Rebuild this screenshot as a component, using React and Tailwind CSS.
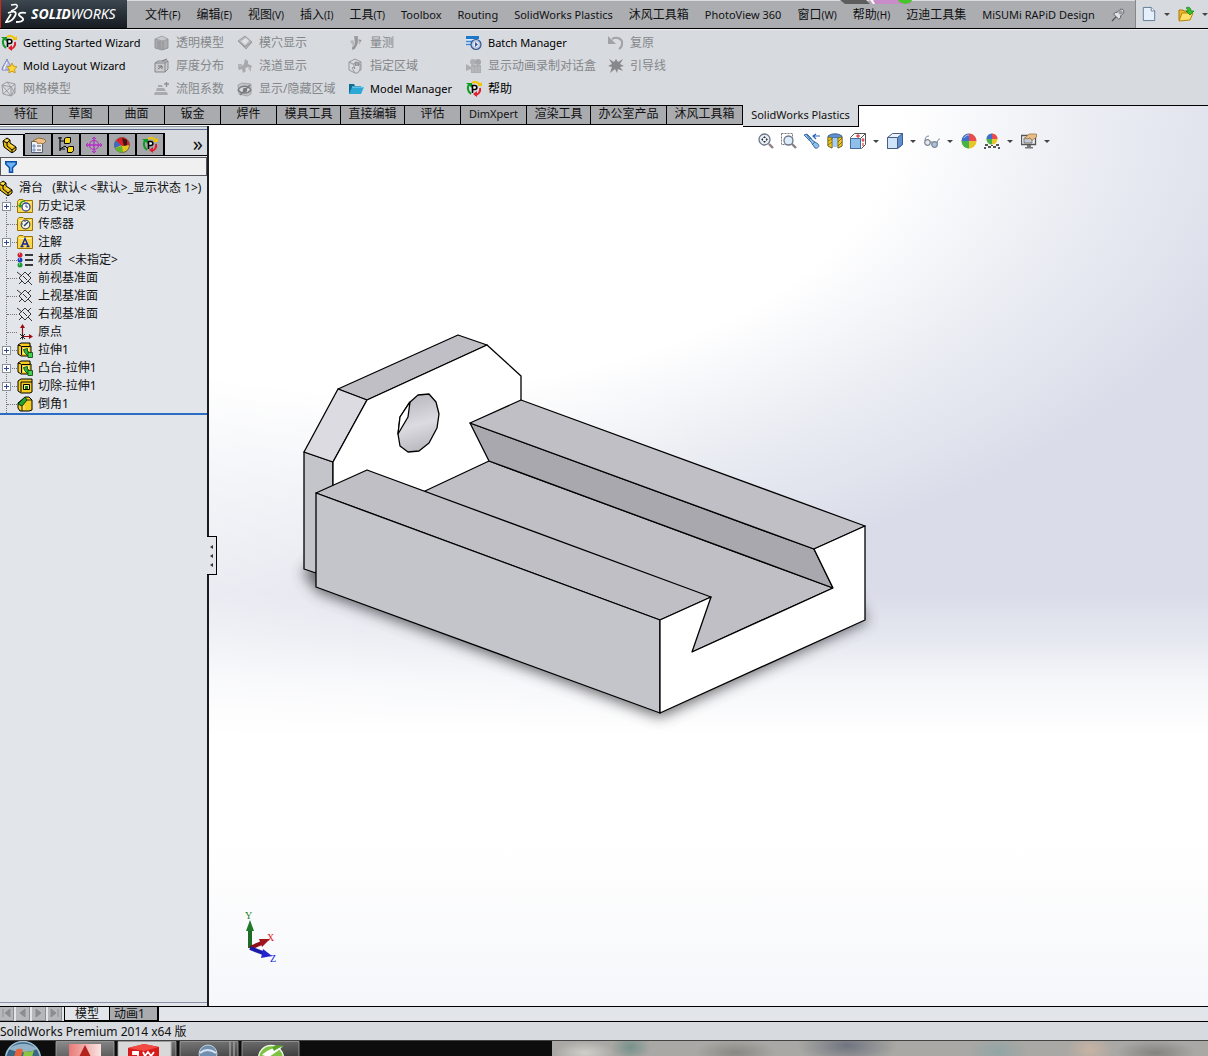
import React, { useState } from 'react'

const menus = [
  ['文件', '(F)'],
  ['编辑', '(E)'],
  ['视图', '(V)'],
  ['插入', '(I)'],
  ['工具', '(T)'],
  ['Toolbox'],
  ['Routing'],
  ['SolidWorks Plastics'],
  ['沐风工具箱'],
  ['PhotoView 360'],
  ['窗口', '(W)'],
  ['帮助', '(H)'],
  ['迈迪工具集'],
  ['MiSUMi RAPiD Design']
]

// Latin labels are set one step smaller than the Chinese ones
const textSize = (label) => (/^[ -~]+$/.test(label) ? 'text-[11px]' : 'text-[12px]')

const Svg = ({ children, className = 'size-4' }) => (
  <svg viewBox="0 0 16 16" className={`shrink-0 ${className}`} fill="none" aria-hidden="true">
    {children}
  </svg>
)

// Ribbon icons
const PlasticsIcon = () => (
  <Svg>
    <path d="M4 3C1 5 1 10 5 13" stroke="#119a24" strokeWidth="2" />
    <path d="M0 2h6v5z" fill="#119a24" />
    <path d="M6 2c3-2 7-1 8 3" stroke="#f0c400" strokeWidth="2" />
    <path d="M11 5h5V1z" fill="#f0c400" />
    <path d="M14 7c1 4-2 7-5 7" stroke="#df1f2d" strokeWidth="2" />
    <path d="M11 10v6l-4-3z" fill="#df1f2d" />
    <path d="M6.500 12V4.500h2.300a2 2 0 0 1 0 4H6.500" fill="#fff" stroke="#000" strokeWidth="1.600" />
  </Svg>
)

const MoldIcon = () => (
  <Svg>
    <path d="M6 1c1 4 5 7 4 11H1c0-4 4-7 5-11z" fill="#b9bfe6" stroke="#7d82bd" />
    <path d="M3 12c0-3 2-5 3-8" stroke="#fff" />
    <path d="m11 5 1.500 3.200 3.500.5-2.500 2.500.6 3.600-3.100-1.600-3.200 1.600.6-3.600L6 8.700l3.500-.5z" fill="#ffd83a" stroke="#c08a00" strokeWidth=".8" />
  </Svg>
)

const MeshIcon = () => (
  <Svg>
    <path d="M1 4 6 1l8 2v9l-4 3-8-2zM1 4l9 2 4-3M10 6v9M1 4l9 11M10 6l-8 7M10 6l4 6M6 1l4 5M10 15l4-8" stroke="#9a9ca0" />
  </Svg>
)

const CubeIcon = () => (
  <Svg>
    <path d="M1 4v9l7 2 6-2V4L8 1z" fill="#a9abae" />
    <path d="M1 4l7-3 6 3-5 2z" fill="#c7c9cc" stroke="#96989b" strokeWidth=".7" />
    <path d="M4 6v7M6 6v8M9 6v9M1 4v9l7 2 6-2V4" stroke="#898b8f" strokeWidth=".8" />
  </Svg>
)

const ThicknessIcon = () => (
  <Svg>
    <path d="M1 5h10v9H1zM1 5l3-2h10v8l-3 3M11 5l3-2" fill="#c9cbce" stroke="#85878b" />
    <path d="M4 11l4-3M4 8h4v3M8 3l5-2" stroke="#6e7074" />
  </Svg>
)

const FlowIcon = () => (
  <Svg>
    <path d="M1 11h12l1 3H0zM3 7h7l2 3H2zM4 4h4l1 2H4z" fill="#a8aaad" />
    <path d="M10 3h5M12.500 1v5" stroke="#8d8f93" strokeWidth="1.300" />
  </Svg>
)

const CavityIcon = () => (
  <Svg>
    <path d="M1 6l7-5 7 6-6 7z" fill="#b4b6ba" stroke="#9d9fa3" />
    <path d="M4 6l5-3 3 3-4 4z" fill="#dfe1e4" />
    <path d="M1 6l7 6 7-5" stroke="#96989c" />
  </Svg>
)

const RunnerIcon = () => (
  <Svg>
    <path d="M8 1l3 2v3l4 2-1 2-4-1-2 2 1 2-3 2-1-4-3 1-1-3 4-1 2-2z" fill="#a7a9ac" />
    <path d="M1 6h4v3H1zM11 10h3v4z" fill="#b3b5b9" />
  </Svg>
)

const HideIcon = () => (
  <Svg>
    <path d="M1 4l4-2 9 1v10l-4 2-8-2z" fill="#c3c5c9" stroke="#a3a5a9" />
    <path d="M1 9c3-5 10-5 13 0-3 4-10 4-13 0z" fill="#d7dade" stroke="#7b7d81" strokeWidth="1.300" />
    <circle cx="8" cy="9" r="2.200" fill="#77797d" />
    <path d="M3 14 13 4" stroke="#77797d" strokeWidth="1.300" />
  </Svg>
)

const ProbeIcon = () => (
  <Svg>
    <path d="M6 1h4v7l-3 6-3 1v-3l3-3z" fill="#a1a3a7" />
    <path d="M2 6l3-1 2 4-2 2zM10 4l4 1-3 5z" fill="#b6b8bb" />
    <path d="M8 2v8l-3 4M11 5l2 1" stroke="#888a8e" />
  </Svg>
)

const RegionIcon = () => (
  <Svg>
    <path d="M1 4l6-3 6 3v8l-6 3-6-3zM1 4l6 3 6-3M7 7v8" stroke="#94969a" />
    <path d="M6 8V5h1.500v3V4H9v4V4.500h1.500V8 6H12v5l-2 4H7L4 10l1-1 2 2z" fill="#d7dade" stroke="#8a8c90" strokeWidth=".8" />
  </Svg>
)

const FolderIcon = () => (
  <Svg>
    <path d="M1 3h5l1 2h6v8H1z" fill="#0b6d93" />
    <path d="M4 6h12l-3 7H1z" fill="#2ba8d6" />
    <path d="M4 6h12" stroke="#8cdcf5" />
  </Svg>
)

const BatchIcon = () => (
  <Svg>
    <path d="M0 2h13v9H0z" fill="#dbe8f6" />
    <path d="M0 1h13v3H0z" fill="#1f77c9" />
    <path d="M0 6.500h7M0 9.500h6" stroke="#3d88cf" strokeWidth="1.400" />
    <circle cx="10" cy="9.500" r="5" fill="#b9c8e6" stroke="#39558d" strokeWidth="1.200" />
    <circle cx="10" cy="9.500" r="2.500" fill="#eef3fb" />
    <path d="M9 7v5l3-2.500z" fill="#39558d" />
  </Svg>
)

const CameraIcon = () => (
  <Svg>
    <circle cx="7" cy="4" r="3" fill="#aeb0b4" />
    <circle cx="12" cy="4" r="3" fill="#a4a6aa" />
    <path d="M5 7h10v8H5zM5 9 0 6v7l5-2z" fill="#acaeb2" />
    <path d="M7 9v5M10 9v5M13 9v5" stroke="#bec0c4" />
  </Svg>
)

const UndoIcon = () => (
  <Svg>
    <path d="M4 4c5-3 11 0 10 5 0 2-1 4-3 5" stroke="#a0a2a6" strokeWidth="2" />
    <path d="M0 1v8h8z" fill="#a0a2a6" />
  </Svg>
)

const LeaderIcon = () => (
  <Svg>
    <path d="M1 1l5 3 2-3 2 3 5-3-3 5 4 2-4 1 3 4-5-2-1 4-2-4-5 4 2-6-4-1 4-2z" fill="#86888c" />
  </Svg>
)

const ribbon = [
  [
    [PlasticsIcon, 'Getting Started Wizard', true],
    [MoldIcon, 'Mold Layout Wizard', true],
    [MeshIcon, '网格模型']
  ],
  [
    [CubeIcon, '透明模型'],
    [ThicknessIcon, '厚度分布'],
    [FlowIcon, '流阻系数']
  ],
  [
    [CavityIcon, '模穴显示'],
    [RunnerIcon, '浇道显示'],
    [HideIcon, '显示/隐藏区域']
  ],
  [
    [ProbeIcon, '量测'],
    [RegionIcon, '指定区域'],
    [FolderIcon, 'Model Manager', true]
  ],
  [
    [BatchIcon, 'Batch Manager', true],
    [CameraIcon, '显示动画录制对话盒'],
    [PlasticsIcon, '帮助', true]
  ],
  [
    [UndoIcon, '复原'],
    [LeaderIcon, '引导线']
  ]
]

const tabs = [
  ['特征', 'w-[53px]'],
  ['草图', 'w-14'],
  ['曲面', 'w-14'],
  ['钣金', 'w-14'],
  ['焊件', 'w-14'],
  ['模具工具', 'w-16'],
  ['直接编辑', 'w-16'],
  ['评估', 'w-14'],
  ['DimXpert', 'w-[66px]'],
  ['渲染工具', 'w-16'],
  ['办公室产品', 'w-[76px]'],
  ['沐风工具箱', 'w-[76px]'],
  ['SolidWorks Plastics', 'w-[116px]']
]

// Feature tree icons
const PartIcon = () => (
  <Svg>
    <path d="M1 4l4-3 3 2v3l6 4v3l-4 3-8-6z" fill="#e9bd14" stroke="#000" />
    <path d="M1 4l4 2 3-3M5 6v3l5 4 4-3M10 13v3" stroke="#000" />
    <path d="M3 3l3 1M8 8l3 2" stroke="#fff07a" />
  </Svg>
)

const FolderBase = ({ children }) => (
  <Svg>
    <path d="M.5 3.500 2 1.500h4l1 1h8.500v12H.5z" fill="#fbd84c" stroke="#9b7400" />
    <path d="M2 4.500h12" stroke="#fff3b0" />
    {children}
  </Svg>
)

const HistoryIcon = () => (
  <FolderBase>
    <circle cx="9" cy="9" r="4" fill="#fff" stroke="#32449b" strokeWidth="1.300" />
    <path d="M9 6.500V9h2" stroke="#32449b" />
    <path d="M3 8c0-3 2-5 5-5" stroke="#1f9b26" strokeWidth="1.600" />
    <path d="M1 7h5L3 10z" fill="#1f9b26" />
  </FolderBase>
)

const SensorIcon = () => (
  <FolderBase>
    <circle cx="8.500" cy="8.500" r="4.300" fill="#f5f6e8" stroke="#4d5360" strokeWidth="1.200" />
    <path d="M7 10l4-4" stroke="#22366e" strokeWidth="1.400" />
    <path d="M5 8h1M8 5v1" stroke="#22366e" />
  </FolderBase>
)

const NoteIcon = () => (
  <FolderBase>
    <path d="M4.500 12.500 8 4.500l3.500 8M5.500 10h5M3.500 12.500h3M9.500 12.500h3" stroke="#14259c" strokeWidth="1.400" />
  </FolderBase>
)

const MaterialIcon = () => (
  <Svg>
    <circle cx="3" cy="3" r="2.500" fill="#d2202a" />
    <circle cx="3" cy="8" r="2.500" fill="#2040c8" />
    <circle cx="3" cy="13" r="2.500" fill="#1b9c36" />
    <path d="M8 3h8M8 8h8M8 13h8" stroke="#000" strokeWidth="1.400" />
    <path d="M2 2h1M2 7h1M2 12h1" stroke="#fff" />
  </Svg>
)

const PlaneIcon = () => (
  <Svg>
    <path d="M2 8l6-6 6 6-6 6zM0 2l5 4M6 6l4 4M11 11l4 4M14 2l-3 3M2 14l3-3" stroke="#222" strokeWidth=".9" />
  </Svg>
)

const OriginIcon = () => (
  <Svg>
    <path d="M5.500 12V2M5.500 12.500H14" stroke="#9b0a12" strokeWidth="1.200" />
    <path d="M5.500 0 8 4H3zM16 12.500 12 10v5z" fill="#9b0a12" />
    <path d="M3 10l5 5M8 10l-5 5M5.500 9.500v6" stroke="#222" />
  </Svg>
)

const BossIcon = () => (
  <Svg>
    <path d="M1 3l3-2h9v3h1v10H4l-3-2z" fill="#f5cd25" stroke="#000" />
    <path d="M4.500 13V4.500H13M1 3l3 1" stroke="#000" />
    <path d="M6 6h6v6H6z" fill="#fdf3a8" />
    <path d="M6.500 7.500l4-1v3h1l1 3-2 1-3-3z" fill="#32b53c" stroke="#053f09" strokeWidth=".8" />
    <path d="M11 10.500h4.500v5H11z" fill="#44d14d" stroke="#053f09" strokeWidth=".8" />
  </Svg>
)

const CutIcon = () => (
  <Svg>
    <path d="M1 3l3-2h11v13l-2 1H4l-3-2z" fill="#f5cd25" stroke="#000" />
    <path d="M4 14V4h11" stroke="#000" />
    <path d="M6.500 6.500h6v5h-6z" fill="#f7ec9a" stroke="#000" />
    <path d="M8 8h3v3H8z" fill="#0c7c17" />
  </Svg>
)

const ChamferIcon = () => (
  <Svg>
    <path d="M1 7l7-6h4l3 3v10l-3 1H3l-2-3z" fill="#f5cd25" stroke="#000" />
    <path d="M1 8l7-7 2 3-5 6z" fill="#28a332" stroke="#033d08" />
    <path d="M5 10v5M10 4h5" stroke="#000" strokeWidth=".8" />
    <path d="M7 10v4" stroke="#fff3a0" />
  </Svg>
)

const tree = [
  [HistoryIcon, '历史记录', true],
  [SensorIcon, '传感器'],
  [NoteIcon, '注解', true],
  [MaterialIcon, '材质  <未指定>'],
  [PlaneIcon, '前视基准面'],
  [PlaneIcon, '上视基准面'],
  [PlaneIcon, '右视基准面'],
  [OriginIcon, '原点'],
  [BossIcon, '拉伸1', true],
  [BossIcon, '凸台-拉伸1', true],
  [CutIcon, '切除-拉伸1', true],
  [ChamferIcon, '倒角1']
]

const PropertyIcon = () => (
  <Svg>
    <path d="M1.500 4.500h11v11h-11z" fill="#edf1f8" stroke="#555d70" />
    <path d="M3 8h2v2H3zM3 12h2v2H3z" fill="#fff" stroke="#3b62b1" strokeWidth=".7" />
    <path d="M7 9h4M7 13h4" stroke="#555" />
    <path d="M3 4l5-3 6 1 2 2-3 3-3-1-2 1-1-2z" fill="#efc08a" stroke="#8c5a25" strokeWidth=".8" />
  </Svg>
)

const ConfigIcon = () => (
  <Svg>
    <path d="M2 0v14M2 4h4M2 12h5M0 1h4" stroke="#000" strokeWidth="1.200" />
    <path d="M6.500 1.500l2-1h4v5l-1.500 1H6.500zM9.500 10.500l2-1h4v4l-1.500 2H9.500z" fill="#f7d81e" stroke="#000" />
    <path d="M2 12l5-3 3 3" stroke="#000" />
  </Svg>
)

const DimIcon = () => (
  <Svg>
    <circle cx="8" cy="8" r="4.500" stroke="#b62ec7" strokeWidth="1.200" />
    <path d="M8 0v16M0 8h16" stroke="#b62ec7" strokeWidth="1.300" />
    <path d="M6 2l2-2 2 2M6 14l2 2 2-2M2 6 0 8l2 2M14 6l2 2-2 2" stroke="#b62ec7" />
  </Svg>
)

const BallIcon = () => (
  <Svg>
    <circle cx="8" cy="8" r="7.500" fill="#e6c72b" />
    <path d="M8 8V.5A7.500 7.500 0 0 1 15.500 8z" fill="#e84c52" />
    <path d="M8 8V.5A7.500 7.500 0 0 0 .5 8z" fill="#3e70d2" />
    <path d="M8 8v7.500A7.500 7.500 0 0 1 .5 8z" fill="#47b34b" />
    <path d="M3 5c1-2 3-3 5-3" stroke="#fff" strokeOpacity=".6" />
  </Svg>
)

const DisplayIcon = () => (
  <Svg>
    <circle cx="8" cy="8" r="7.500" fill="#e2c51f" stroke="#333" strokeWidth=".6" />
    <path d="M8 8 2 3.500A7.500 7.500 0 0 0 1 11z" fill="#3d69c9" />
    <path d="M2 3.500C6-2 15 0 15.500 8L8 9z" fill="#d92027" />
    <path d="M8 1l5 2v5l-3 1z" fill="#33171c" />
    <path d="M1 11c2 4 5 5 8 4.500L8 9z" fill="#62b332" />
  </Svg>
)

const managerTabs = [
  ['FeatureManager', PartIcon],
  ['PropertyManager', PropertyIcon],
  ['ConfigurationManager', ConfigIcon],
  ['DimXpertManager', DimIcon],
  ['DisplayManager', DisplayIcon],
  ['Plastics', PlasticsIcon]
]

// Heads-up view icons
const ZoomFitIcon = () => (
  <Svg>
    <circle cx="6.500" cy="6.500" r="5.500" fill="#e8eef6" stroke="#6e7686" strokeWidth="1.300" />
    <path d="M6.500 3l1.500 2H5zM6.500 10 8 8H5zM3 6.500 5 5v3zM10 6.500 8 5v3z" fill="#333" />
    <path d="m11 11 4 4" stroke="#8a7f88" strokeWidth="2.400" />
  </Svg>
)

const ZoomAreaIcon = () => (
  <Svg>
    <path d="M.5.5h11v11H.5z" stroke="#777" strokeDasharray="2 1" />
    <circle cx="7.500" cy="7.500" r="4.500" fill="#dcebf8" stroke="#6e7686" strokeWidth="1.300" />
    <path d="m11 11 4 4" stroke="#8a7f88" strokeWidth="2.400" />
  </Svg>
)

const PrevViewIcon = () => (
  <Svg>
    <path d="M0 2l3-1 4 4 1 2 6 4c2 2 0 5-3 4L7 9 5 7z" fill="#8fc1ef" stroke="#3e6da0" />
    <path d="M7 5 4 7M11 9l-3 3M3 2l3 4" stroke="#3e6da0" />
    <path d="M10 3h6M12 1l-3 2 3 3" stroke="#2a62bb" strokeWidth="1.200" />
  </Svg>
)

const SectionIcon = () => (
  <Svg>
    <path d="M1 3c4-3 10-3 14 0v10l-4 2V5H5v10l-4-2z" fill="#5d90cf" stroke="#344e77" strokeWidth=".8" />
    <path d="M1 4l4 1v10l-4-2zM11 5l4-1v9l-4 2z" fill="#f1cb26" stroke="#735c00" strokeWidth=".7" />
    <path d="M1 8l4-2M1 12l4-3M11 9l4-4M11 13l4-4" stroke="#735c00" strokeWidth=".8" />
    <path d="M6 5h4v9H6z" fill="#a6cdf2" />
  </Svg>
)

const OrientIcon = () => (
  <Svg>
    <path d="M4.500.5h11v11l-4 4H.5v-11z" fill="#fff" stroke="#555" />
    <path d="M.5 5.500h10v10H.5z" fill="#8fc0ec" stroke="#456d9c" />
    <path d="M10.500 5.500l5-5" stroke="#555" />
    <path d="M8 1v4M6 3h4M13 5v4M11.500 7h3M13 10v3" stroke="#d21f1f" />
  </Svg>
)

const StyleIcon = () => (
  <Svg>
    <path d="M.5 4.500l5-4h10v11l-5 4H.5z" fill="#e9f2fb" stroke="#4a5e80" />
    <path d="M10.500 4.500l5-4v11l-5 4z" fill="#5f8fd0" stroke="#3a5f98" />
    <path d="M.5 4.500h10v11H.5z" fill="#cfe4f8" stroke="#4a5e80" />
  </Svg>
)

const GlassesIcon = () => (
  <Svg>
    <circle cx="3.500" cy="9.500" r="2.800" fill="#e4e9f1" stroke="#7e8694" strokeWidth="1.200" />
    <circle cx="10.500" cy="11.500" r="2.800" fill="#a8c3e0" stroke="#7e8694" strokeWidth="1.200" />
    <path d="M1 8c0-3 1-5 4-5M6 9h2M13 10c1-3 1-4 3-4" stroke="#7e8694" />
  </Svg>
)

const SceneIcon = () => (
  <Svg>
    <circle cx="8" cy="6" r="5.500" fill="#e6c72b" />
    <path d="M8 6V.5A5.500 5.500 0 0 1 13.500 6z" fill="#e84c52" />
    <path d="M8 6V.5A5.500 5.500 0 0 0 2.500 6z" fill="#3e70d2" />
    <path d="M8 6v5.500A5.500 5.500 0 0 1 2.500 6z" fill="#47b34b" />
    <path d="M1 11h3v2H1zM12 11h3v2h-3zM4 13h3v2H4zM9 13h3v2H9zM0 14h2v2H0zM14 14h2v2h-2zM7 12h2v1H7z" fill="#555" />
  </Svg>
)

const ViewSetIcon = () => (
  <Svg>
    <path d="M.5 2.500h14v9H.5z" fill="#f1f3f6" stroke="#555" strokeWidth="1.300" />
    <path d="M6 12h4v2h2v1.500H4V14h2z" fill="#777" />
    <path d="M3 5h8v5H3z" fill="#c6cad2" stroke="#777" />
    <path d="M4 5l4-4h7.500v3l-4 3-3-2-2 1z" fill="#e8bd88" stroke="#9a6b35" strokeWidth=".7" />
  </Svg>
)

const viewTools = [
  ['整屏显示全图', ZoomFitIcon],
  ['局部放大', ZoomAreaIcon],
  ['上一视图', PrevViewIcon],
  ['剖面视图', SectionIcon],
  ['视图定向', OrientIcon, true],
  ['显示样式', StyleIcon, true],
  ['隐藏/显示项目', GlassesIcon, true],
  ['编辑外观', BallIcon],
  ['应用布景', SceneIcon, true],
  ['视图设定', ViewSetIcon, true]
]

const Caret = () => <span className="block border-x-3 border-t-3 border-x-transparent border-t-[#444]" />

const Logo = () => (
  <div className="flex h-full w-[127px] shrink-0 items-center gap-1 border-l border-[#d5261c] bg-linear-to-b from-[#3c4750] to-[#171c22] pl-1">
    <svg viewBox="0 0 22 22" className="h-[22px] w-[22px] shrink-0" fill="none" stroke="#fff" aria-hidden="true">
      <path d="M6 2c4-1 7-1 6 2-1 2-3 3-6 4" strokeWidth="1.500" />
      <path d="M3 10c7-3 9-1 7 3-2 4-5 6-9 6l5-8" strokeWidth="1.800" />
      <path d="M21 10c-4-1-8 0-7 2 1 2 5 3 4 5-1 2-4 2-7 2" strokeWidth="1.800" />
    </svg>
    <span className="text-[14px] leading-5 text-white italic">
      <b>SOLID</b>WORKS
    </span>
  </div>
)

const MenuBar = () => (
  <header className="flex h-[29px] shrink-0 items-stretch border-b border-black bg-[#abadb1]">
    <Logo />
    <nav className="flex flex-1 items-center gap-4 border-t border-[#dadcdf] pl-[18px]">
      {menus.map(([name, key]) => (
        <button key={name} className={`flex items-center whitespace-nowrap ${textSize(name)}`}>
          {name}
          {key && <span className="text-[10px]">{key}</span>}
        </button>
      ))}
      <button aria-label="固定菜单">
        <Svg className="h-4 w-3.5">
          <path d="M1 15l5-5" stroke="#4c4e53" strokeWidth="1.300" />
          <path d="M3 7l6 6 2-2V9l3-3c2-3-1-6-4-4L7 5H5z" fill="#e0e3e8" stroke="#4c4e53" />
          <circle cx="11" cy="5" r="2.500" fill="#999da5" />
        </Svg>
      </button>
    </nav>
    <div className="flex w-[73px] shrink-0 items-center gap-2 border-l border-[#85878b] bg-[#d7dade] pl-1.5">
      <button aria-label="新建">
        <Svg className="h-4 w-3.5">
          <path d="M1.500.5h9l4 4v11h-13z" fill="#e6f0fa" stroke="#53708f" />
          <path d="M10.500.5v4h4" fill="#fff" stroke="#53708f" />
        </Svg>
      </button>
      <button aria-label="新建选项">
        <Caret />
      </button>
      <button aria-label="打开">
        <Svg>
          <path d="M1 14V4h4l1 1h6v3" fill="#f0b72d" stroke="#a87808" />
          <path d="M1 15 4 7h11l-3 7z" fill="#ffe06a" stroke="#b5830a" />
          <path d="M8 2c3-2 5 0 5 3h3l-4 4-4-4h2c0-1 0-2-2-3z" fill="#2fc12f" stroke="#11780f" strokeWidth=".7" />
        </Svg>
      </button>
      <button aria-label="打开选项">
        <Caret />
      </button>
    </div>
  </header>
)

const Ribbon = () => (
  <div className="grid h-[76px] shrink-0 grid-cols-[153px_83px_111px_118px_142px_auto] border-t border-[#eceef0] bg-[#d7dade] pt-px pl-px">
    {ribbon.map((column, i) => (
      <div key={i} className="flex flex-col">
        {column.map(([Icon, label, enabled]) => (
          <button
            key={label}
            disabled={!enabled}
            className={`flex h-[23px] items-center gap-1.5 whitespace-nowrap ${textSize(label)} ${enabled ? 'text-black' : 'text-[#85878b]'}`}
          >
            <Icon />
            {label}
          </button>
        ))}
      </div>
    ))}
  </div>
)

const FeaturePanel = () => {
  const [filter, setFilter] = useState('')

  return (
    <aside className="relative flex w-[209px] shrink-0 flex-col border-r-2 border-[#1b1c1f] bg-[#e2e5ea]">
      <div className="flex h-[30px] items-end border-b border-black bg-[#d7dade]">
        <div className="flex h-full w-full items-end border-t border-[#8d93a5] pt-0.5">
          <div className="flex h-full w-full items-end border-t border-[#5b6c95]">
            {managerTabs.map(([name, Icon], i) => (
              <button
                key={name}
                aria-label={name}
                className={`flex h-[22px] items-center justify-center border-t border-r-2 border-black ${i === 0 ? '-mb-px w-[25px] bg-[#e2e5ea] pr-1 pb-px' : 'w-7 bg-[#a5a7ab]'}`}
              >
                <Icon />
              </button>
            ))}
            <button aria-label="更多" className="ml-auto h-[22px] pr-1 text-[20px] leading-4">
              »
            </button>
          </div>
        </div>
      </div>
      <label className="mt-px flex h-[19px] items-center border border-[#55575c] bg-[#f0f0f0] pl-1">
        <Svg className="size-3">
          <path d="M1 1h14v3l-5 5v6H6V9L1 4z" fill="#6db4f5" stroke="#0c4fa8" strokeWidth="2" />
        </Svg>
        <input
          aria-label="过滤器"
          value={filter}
          onChange={(e) => setFilter(e.target.value)}
          className="h-4 w-full bg-transparent px-1 outline-none"
        />
      </label>
      <div className="border-b-2 border-[#2b6cc4] pt-[3px]">
        <div className="-ml-0.5 flex h-[18px] items-center gap-[5px] whitespace-pre">
          <PartIcon />
          <span>滑台   (默认&lt; &lt;默认&gt;_显示状态 1&gt;)</span>
        </div>
        <ul className="ml-1.5 border-l border-dotted border-[#777]">
          {tree.map(([Icon, label, children]) => (
            <li key={label} className="relative flex h-[18px] items-center gap-[5px]">
              <span className="-mr-[5px] w-2.5 border-t border-dotted border-[#777]" />
              {children && (
                <button
                  aria-label={`展开 ${label}`}
                  className="absolute -left-[5px] flex size-[9px] items-center justify-center border border-[#8b8f98] bg-white"
                >
                  <svg viewBox="0 0 7 7" className="size-[7px]" stroke="#2c4a9c" aria-hidden="true">
                    <path d="M1 3.500h5M3.500 1v5" />
                  </svg>
                </button>
              )}
              <Icon />
              <span className="whitespace-pre">{label}</span>
            </li>
          ))}
        </ul>
      </div>
      <div className="mt-auto mb-[3px] border-t border-[#8d93a5]" />
      <button
        aria-label="折叠面板"
        className="absolute top-[410px] -right-[10px] flex h-[39px] w-2.5 flex-col items-center justify-center gap-[5px] border border-l-0 border-black bg-[#e2e5ea]"
      >
        {[0, 1, 2].map((n) => (
          <span key={n} className="block border-y-2 border-r-3 border-y-transparent border-r-[#333]" />
        ))}
      </button>
    </aside>
  )
}

const Model = () => (
  <svg
    viewBox="290 320 620 420"
    className="absolute top-[194px] left-[81px] h-[420px] w-[620px]"
    stroke="#000"
    strokeWidth="1.300"
    strokeLinejoin="round"
    aria-hidden="true"
  >
    <defs>
      <filter id="soft" x="-10%" y="-10%" width="120%" height="120%">
        <feGaussianBlur stdDeviation="7" />
      </filter>
      <linearGradient id="bore" x1="0" y1="0" x2="0.200" y2="1">
        <stop offset="0" stopColor="#b3b2b8" />
        <stop offset=".6" stopColor="#dcdbe1" />
        <stop offset="1" stopColor="#bdbcc2" />
      </linearGradient>
    </defs>
    <path d="M302 572 318 592 660 717 868 621 850 590 330 550z" fill="#44454a" stroke="none" opacity=".8" filter="url(#soft)" />
    {/* back plate */}
    <path d="M304 452 333 462V500L316 573 304 569z" fill="#c4c5ca" />
    <path d="M338 389 458 335 487 345 367 400z" fill="#c0bfc5" />
    <path d="M338 389 367 400 333 462 304 452z" fill="#dcdbe1" />
    <path d="M367 400 487 345 521 376V470L425 495 333 490V462z" fill="#fff" />
    <path d="M418 395 429 394 436 402 439 414 437 428 429 443 419 451 408 452 400 446 398 434 400 417 409 403z" fill="url(#bore)" />
    <path d="M410 402 408 417 398 434 400 417z" fill="#fff" />
    {/* slide base */}
    <path d="M425 491 489 461 833 588 692 652 500 580z" fill="#c0bfc5" />
    <path d="M470 423 814 549 833 588 489 461z" fill="#a9a8ae" />
    <path d="M470 423 521 400 865 526 814 549z" fill="#c0bfc5" />
    <path d="M316 493 367 470 711 597 660 620z" fill="#c0bfc5" />
    <path d="M316 493 660 620V713L316 587z" fill="#c4c5ca" />
    <path d="M660 620 711 597 692 652 833 588 814 549 865 526V620L660 713z" fill="#fff" />
  </svg>
)

const Triad = () => (
  <svg viewBox="0 0 36 54" className="absolute bottom-[42px] left-[33px] h-[54px] w-9" aria-hidden="true">
    <path d="M8 38V17" stroke="#1e6b25" strokeWidth="4" />
    <path d="M8 10l4 11H4z" fill="#1e7a27" />
    <path d="M8 38l14-6" stroke="#8f1018" strokeWidth="4" />
    <path d="M28 29l-8 8-3-8z" fill="#a3151d" />
    <path d="M8 38l13 5" stroke="#1c1cab" strokeWidth="4" />
    <path d="M30 46l-11 2 2-9z" fill="#2525cf" />
    <g className="font-['Liberation_Serif'] text-[10px]">
      <text x="3" y="9" fill="#18801f">Y</text>
      <text x="25" y="31" fill="#e8202a">X</text>
      <text x="28" y="52" fill="#1414e8">Z</text>
    </g>
  </svg>
)

const Viewport = () => (
  <main className="relative min-w-0 flex-1 overflow-hidden">
    <div className="flex items-center gap-[7px] pt-[7px] pl-[549px]">
      {viewTools.map(([name, Icon, menu]) => (
        <React.Fragment key={name}>
          <button aria-label={name}>
            <Icon />
          </button>
          {menu && (
            <button aria-label={`${name}选项`} className="mr-px">
              <Caret />
            </button>
          )}
        </React.Fragment>
      ))}
    </div>
    <Model />
    <Triad />
  </main>
)

const navArrows = ['M3 2v8M10 2 5 6l5 4z', 'M9 2 4 6l5 4z', 'M4 2l5 4-5 4z', 'M10 2v8M3 2l5 4-5 4z']

const Footer = () => (
  <footer className="shrink-0">
    <div className="flex h-4 items-start border-y border-black bg-[#e2e5ea]">
      <div className="flex w-16 gap-0.5">
        {navArrows.map((d) => (
          <button key={d} aria-label="滚动标签" className="h-3.5 w-3.5 border-r border-b border-[#8b8d91] bg-[#b5b7bb]">
            <svg viewBox="0 0 13 13" fill="#8b8d91" stroke="#8b8d91" aria-hidden="true">
              <path d={d} />
            </svg>
          </button>
        ))}
      </div>
      <button className="h-3.5 w-[46px] border-x border-b border-black leading-3">模型</button>
      <button className="h-3.5 w-[49px] border-r-2 border-b border-black bg-[#a9abaf] pr-2 leading-3">动画1</button>
    </div>
    <div className="flex h-[19px] items-center border-b border-[#444] bg-[#d7dade] pt-0.5 whitespace-pre">
      SolidWorks Premium 2014 x64 版
    </div>
  </footer>
)

const Taskbar = () => (
  <div className="flex h-[15px] shrink-0 items-stretch overflow-hidden bg-[#0d0d0d]">
    <svg viewBox="0 0 552 15" className="h-[15px] w-[552px] shrink-0" aria-hidden="true">
      <defs>
        <linearGradient id="glass" x1="0" y1="0" x2="1" y2="1">
          <stop offset="0" stopColor="#8b8b8b" />
          <stop offset="1" stopColor="#3c3c3c" />
        </linearGradient>
        <linearGradient id="acad" x1="0" y1="0" x2="1" y2="0">
          <stop offset="0" stopColor="#e87a77" />
          <stop offset="1" stopColor="#f9e4e2" />
        </linearGradient>
      </defs>
      <circle cx="23" cy="18" r="17.500" fill="#3b6787" stroke="#9dbdd2" strokeWidth="1.500" />
      <path d="M9 8c8-7 20-7 28 0-7 4-20 4-28 0z" fill="#b9d3e2" opacity=".7" />
      <path d="M16 9c3-2 5-1 7 0l-2 7h-7z" fill="#e8633a" />
      <path d="M24 10c4 1 7 1 10-1l-2 7h-9z" fill="#8cc63f" />
      <g fill="url(#glass)" stroke="#a6a6a6" strokeWidth=".8">
        <path d="M56 .5h58V16H56zM171 .5h5V16h-5zM180 .5h50V16h-50zM230 .5h4V16h-4zM234 .5h4V16h-4zM242 .5h57V16h-57z" />
        <path d="M118 .5h53V16h-53z" fill="#d9d9d9" />
      </g>
      <path d="M69 3h32v13H69z" fill="url(#acad)" />
      <path d="M85 4l6 12H79z" fill="#b3221b" />
      <path d="M128 7l16-4 15 3v10h-31z" fill="#d81a1a" />
      <path d="M128 7l16-4 15 3-15 4z" fill="#f04a42" />
      <path d="M139 11h-6v2h5v3M143 11l2 4 3-4 3 4 3-4" stroke="#fff" strokeWidth="1.800" fill="none" />
      <circle cx="208" cy="13" r="9" fill="#6f8fb0" stroke="#c6d4e2" />
      <path d="M200 12c5-4 10-4 16 0" stroke="#d7e4ef" strokeWidth="2" fill="none" />
      <circle cx="271" cy="17" r="12.500" fill="#7fc241" stroke="#eef7e4" strokeWidth="1.500" />
      <path d="M262 14c4-4 9-7 21-9-4 5-9 7-14 11z" fill="#fff" />
      <path d="M272 6c4-2 8-2 12-1-4 1-7 3-10 5z" fill="#5ba42c" />
    </svg>
    <div className="flex-1 bg-[radial-gradient(ellipse_20px_14px_at_12%_40%,#76918a,transparent),radial-gradient(ellipse_50px_20px_at_45%_30%,#6f747f,transparent),radial-gradient(ellipse_30px_12px_at_5%_80%,#d0cfca,transparent),radial-gradient(ellipse_30px_16px_at_68%_70%,#91a5a5,transparent),radial-gradient(ellipse_24px_16px_at_82%_60%,#c8b3a3,transparent),radial-gradient(ellipse_40px_14px_at_92%_80%,#858380,transparent),radial-gradient(ellipse_40px_14px_at_28%_80%,#898883,transparent)] bg-[#a9a8a4]" />
  </div>
)

// Chat bubble docked to the top edge of the screen
const DockedWidget = () => (
  <svg viewBox="0 0 74 5" className="absolute top-0 left-[839px] h-[5px] w-[74px]" aria-hidden="true">
    <path d="M1 0h26l4 4H6z" fill="#5d5d5d" />
    <path d="M30 0h42v4H34z" fill="#c88cc8" />
    <path d="M31 0l3 4h2L34 0z" fill="#fff" />
    <path d="M59 0h14c-1 5-12 5-14 0z" fill="#45c72c" />
  </svg>
)

const App = () => {
  const [active, setActive] = useState('SolidWorks Plastics')

  return (
    <div className="relative flex h-screen flex-col overflow-hidden bg-white font-['Noto_Sans','Noto_Sans_CJK_SC',sans-serif] text-[12px] leading-4 text-[#111]">
      <MenuBar />
      <DockedWidget />
      <Ribbon />
      <div className="flex min-h-0 flex-1 flex-col bg-[linear-gradient(180deg,transparent_54%,rgb(255_255_255/0.3)_59%,rgb(255_255_255/0.75)_64%,white_70%,white_82%,#f6f7fa_100%),linear-gradient(90deg,rgb(255_255_255/0.45)_15%,transparent_60%),radial-gradient(ellipse_73%_53%_at_31%_0%,white_60%,#eceef4_80%,#dadde9_105%)]">
        <div className="flex h-[21px] shrink-0 items-start">
          {tabs.map(([name, width]) => (
            <button
              key={name}
              onClick={() => setActive(name)}
              className={`shrink-0 border-r border-b border-black pb-0.5 whitespace-nowrap ${width} ${textSize(name)} ${name === active ? 'relative z-10 h-[22px] bg-[#d7dade]' : 'h-5 border-t bg-[#a9abaf]'}`}
            >
              {name}
            </button>
          ))}
          <div className="flex-1 border-t border-black" />
        </div>
        <div className="flex min-h-0 flex-1">
          <FeaturePanel />
          <Viewport />
        </div>
      </div>
      <Footer />
      <Taskbar />
    </div>
  )
}

export default App
